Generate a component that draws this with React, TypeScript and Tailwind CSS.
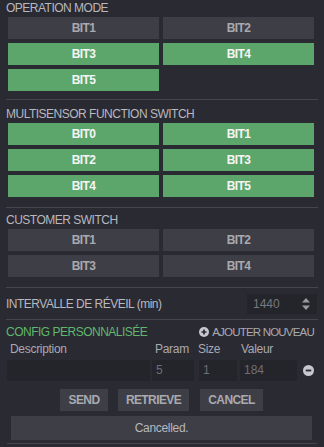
import React from "react";

type Bit = { label: string; on: boolean };

const operationMode: Bit[] = [
  { label: "BIT1", on: false },
  { label: "BIT2", on: false },
  { label: "BIT3", on: true },
  { label: "BIT4", on: true },
  { label: "BIT5", on: true },
];

const multisensor: Bit[] = [
  { label: "BIT0", on: true },
  { label: "BIT1", on: true },
  { label: "BIT2", on: true },
  { label: "BIT3", on: true },
  { label: "BIT4", on: true },
  { label: "BIT5", on: true },
];

const customer: Bit[] = [
  { label: "BIT1", on: false },
  { label: "BIT2", on: false },
  { label: "BIT3", on: false },
  { label: "BIT4", on: false },
];

function Divider() {
  return <div className="mx-[6px] h-px bg-[#45454d]" />;
}

function Section({ title, bits, top, bottom }: { title: string; bits: Bit[]; top: string; bottom: string }) {
  return (
    <div className={`${top} ${bottom}`}>
      <div className="pl-[6px] mb-[2px] text-[12px] leading-[14px] tracking-[-0.5px] text-[#b8b8be]">{title}</div>
      <div className="grid grid-cols-[151px_151px] gap-[4px] pl-[8px]">
        {bits.map((b, i) => (
          <button
            key={i}
            className={`h-[22px] text-[12px] font-bold tracking-[-0.6px] ${
              b.on ? "bg-[#5ca66b] text-[#f4f4f4]" : "bg-[#3e3e46] text-[#a9a9b0]"
            }`}
          >
            {b.label}
          </button>
        ))}
      </div>
    </div>
  );
}

export default function App() {
  return (
    <div
      className="w-[324px] h-[447px] bg-[#2a2a33] overflow-hidden"
      style={{ fontFamily: '"Liberation Sans", Arial, sans-serif' }}
    >
      <Section title="OPERATION MODE" bits={operationMode} top="pt-[1px]" bottom="pb-[8px]" />
      <Divider />
      <Section title="MULTISENSOR FUNCTION SWITCH" bits={multisensor} top="pt-[7px]" bottom="pb-[10px]" />
      <Divider />
      <Section title="CUSTOMER SWITCH" bits={customer} top="pt-[5px]" bottom="pb-[10px]" />
      <Divider />

      {/* wake interval */}
      <div className="flex items-center justify-between pl-[6px] pr-[7px] h-[31px]">
        <span className="text-[12px] tracking-[-0.5px] text-[#b8b8be]">INTERVALLE DE RÉVEIL (min)</span>
        <div className="flex items-center w-[70px] h-[20px] bg-[#24242b]">
          <span className="flex-1 pl-[6px] text-[12px] text-[#77777e]">1440</span>
          <svg width="8" height="12" viewBox="0 0 8 12" className="mr-[7px]">
            <path d="M4 0 L8 4.5 L0 4.5 Z" fill="#9a9aa2" />
            <path d="M4 12 L8 7.5 L0 7.5 Z" fill="#9a9aa2" />
          </svg>
        </div>
      </div>
      <Divider />

      {/* custom config */}
      <div className="flex items-center justify-between pl-[6px] pr-[10px] mt-[5px]">
        <span className="text-[12px] leading-[14px] tracking-[-0.5px] text-[#5fb86c]">CONFIG PERSONNALISÉE</span>
        <span className="flex items-center gap-[3px] text-[11.5px] leading-[14px] tracking-[-0.8px] text-[#a9a9b0]">
          <svg width="10" height="10" viewBox="0 0 12 12">
            <circle cx="6" cy="6" r="6" fill="#c8c8ce" />
            <path d="M6 3 V9 M3 6 H9" stroke="#2a2a33" strokeWidth="2" />
          </svg>
          AJOUTER NOUVEAU
        </span>
      </div>
      <div className="flex text-[12px] leading-[14px] tracking-[-0.3px] text-[#a9a9b0] mt-[3px]">
        <span className="w-[152px] pl-[10px]">Description</span>
        <span className="w-[43px] pl-[3px]">Param</span>
        <span className="w-[43px] pl-[3px]">Size</span>
        <span className="pl-[3px]">Valeur</span>
      </div>
      <div className="flex items-center pl-[7px] mt-[4px]">
        <div className="w-[143px] h-[21px] bg-[#24242b]" />
        <div className="ml-[2px] w-[42px] h-[21px] bg-[#24242b] pl-[4px] text-[12px] leading-[21px] text-[#6e6e76]">5</div>
        <div className="ml-[5px] w-[38px] h-[21px] bg-[#24242b] pl-[4px] text-[12px] leading-[21px] text-[#6e6e76]">1</div>
        <div className="ml-[3px] w-[57px] h-[21px] bg-[#24242b] pl-[4px] text-[12px] leading-[21px] text-[#6e6e76]">184</div>
        <svg width="11" height="11" viewBox="0 0 12 12" className="ml-[6px]">
          <circle cx="6" cy="6" r="6" fill="#c8c8ce" />
          <path d="M3 6 H9" stroke="#2a2a33" strokeWidth="2" />
        </svg>
      </div>

      <div className="flex pl-[60px] mt-[8px]">
        <button className="w-[48px] h-[22px] bg-[#3e3e46] text-[12px] font-bold tracking-[-0.6px] text-[#a9a9b0]">
          SEND
        </button>
        <button className="ml-[10px] w-[71px] h-[22px] bg-[#3e3e46] text-[12px] font-bold tracking-[-0.6px] text-[#a9a9b0]">
          RETRIEVE
        </button>
        <button className="ml-[11px] w-[63px] h-[22px] bg-[#3e3e46] text-[12px] font-bold tracking-[-0.6px] text-[#a9a9b0]">
          CANCEL
        </button>
      </div>

      <div className="ml-[11px] w-[301px] mt-[5px] h-[24px] bg-[#3e3e46] flex items-center justify-center text-[12px] tracking-[-0.3px] text-[#b8b8be]">
        Cancelled.
      </div>
      <div className="mx-[7px] mt-[3px] h-px bg-[#45454d]" />
    </div>
  );
}
